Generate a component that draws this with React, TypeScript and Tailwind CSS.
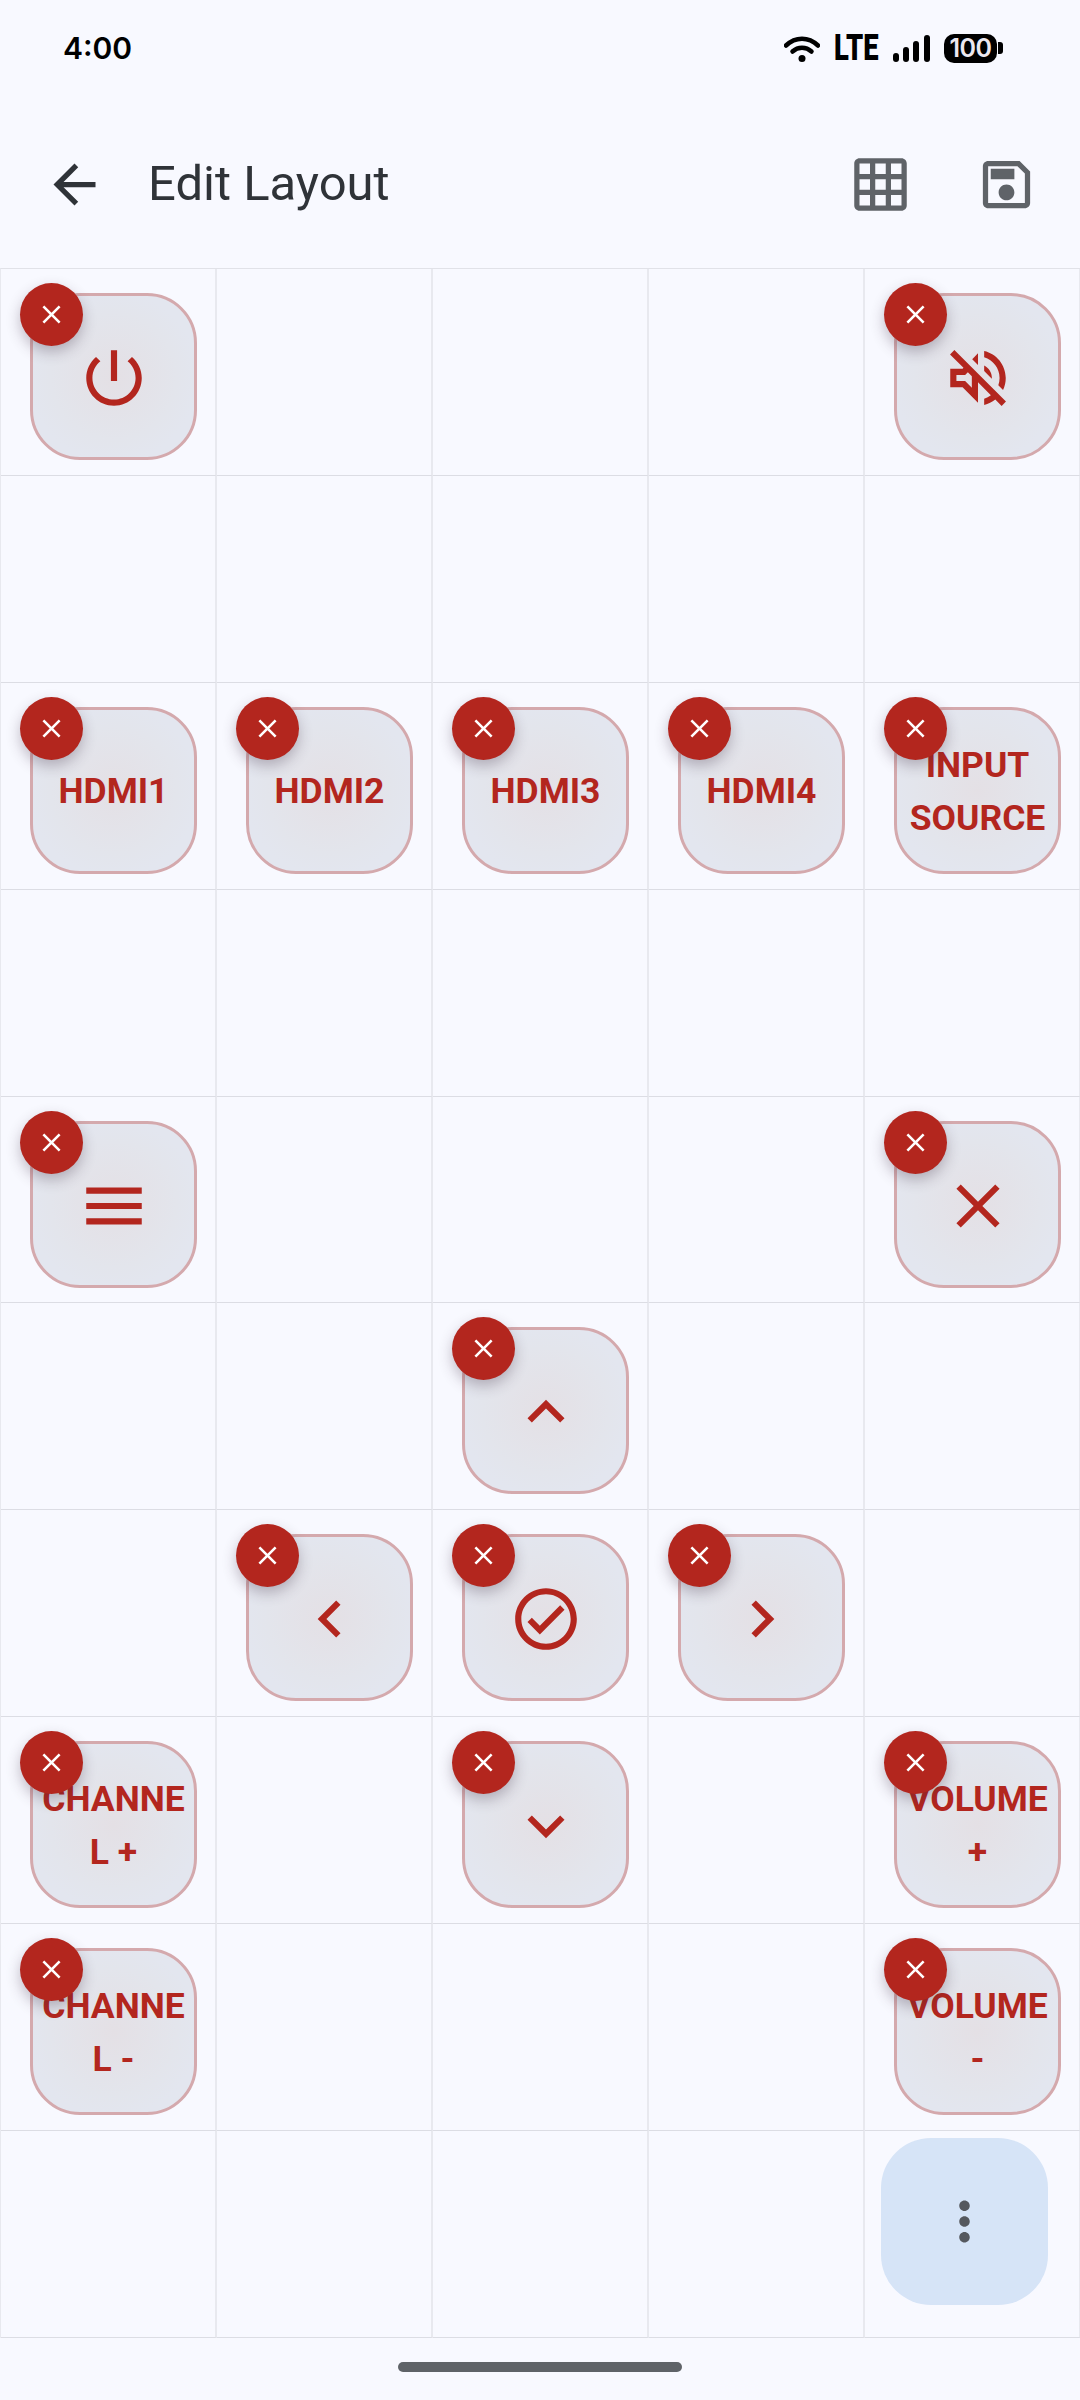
const red = "#b3261e"

const paths: Record<string, string> = {
  power: "M13 3h-2v10h2V3zm4.83 2.17l-1.42 1.42C17.99 7.86 19 9.81 19 12c0 3.87-3.13 7-7 7s-7-3.13-7-7c0-2.19 1.01-4.14 2.58-5.42L6.17 5.17C4.23 6.82 3 9.26 3 12c0 4.97 4.03 9 9 9s9-4.03 9-9c0-2.74-1.23-5.18-3.17-6.83z",
  mute: "M4.34 2.93L2.93 4.34 7.29 8.7 7 9H3v6h4l5 5v-6.59l4.18 4.18c-.65.49-1.38.88-2.18 1.11v2.06c1.34-.3 2.57-.92 3.61-1.75l2.05 2.05 1.41-1.41L4.34 2.93zM10 15.17L7.83 13H5v-2h2.83l.88-.88L10 11.41v3.76zM19 12c0 .82-.15 1.61-.41 2.34l1.53 1.53c.56-1.17.88-2.48.88-3.87 0-4.28-2.99-7.86-7-8.77v2.06c2.89.86 5 3.54 5 6.71zm-7-8l-1.88 1.88L12 7.76zm4.5 8c0-1.77-1.02-3.29-2.5-4.03v1.79l2.48 2.48c.01-.08.02-.16.02-.24z",
  menu: "M3 18h18v-2H3v2zm0-5h18v-2H3v2zm0-7v2h18V6H3z",
  close: "M19 6.41L17.59 5 12 10.59 6.41 5 5 6.41 10.59 12 5 17.59 6.41 19 12 13.41 17.59 19 19 17.59 13.41 12 19 6.41z",
  up: "M7.41 15.41L12 10.83l4.59 4.58L18 14l-6-6-6 6z",
  down: "M7.41 8.59L12 13.17l4.59-4.58L18 10l-6 6-6-6 1.41-1.41z",
  left: "M15.41 16.59L10.83 12l4.58-4.59L14 6l-6 6 6 6 1.41-1.41z",
  right: "M8.59 16.59L13.17 12 8.59 7.41 10 6l6 6-6 6-1.41-1.41z",
  check: "M12 2C6.48 2 2 6.48 2 12s4.48 10 10 10 10-4.48 10-10S17.52 2 12 2zm0 18c-4.41 0-8-3.59-8-8s3.59-8 8-8 8 3.59 8 8-3.59 8-8 8zm4.59-12.42L10 14.17l-2.59-2.58L6 13l4 4 8-8z",
  back: "M20 11H7.83l5.59-5.59L12 4l-8 8 8 8 1.41-1.41L7.83 13H20v-2z",
  grid: "M20 2H4c-1.1 0-2 .9-2 2v16c0 1.1.9 2 2 2h16c1.1 0 2-.9 2-2V4c0-1.1-.9-2-2-2zM8 20H4v-4h4v4zm0-6H4v-4h4v4zm0-6H4V4h4v4zm6 12h-4v-4h4v4zm0-6h-4v-4h4v4zm0-6h-4V4h4v4zm6 12h-4v-4h4v4zm0-6h-4v-4h4v4zm0-6h-4V4h4v4z",
  save: "M17 3H5c-1.11 0-2 .9-2 2v14c0 1.1.89 2 2 2h14c1.1 0 2-.9 2-2V7l-4-4zm2 16H5V5h11.17L19 7.83V19zm-7-7c-1.66 0-3 1.34-3 3s1.34 3 3 3 3-1.34 3-3-1.34-3-3-3zM6 6h9v4H6z",
  more: "M12 8c1.1 0 2-.9 2-2s-.9-2-2-2-2 .9-2 2 .9 2 2 2zm0 2c-1.1 0-2 .9-2 2s.9 2 2 2 2-.9 2-2-.9-2-2-2zm0 6c-1.1 0-2 .9-2 2s.9 2 2 2 2-.9 2-2-.9-2-2-2z",
}

function Icon({ name, size, color }: { name: string; size: number; color: string }) {
  return (
    <svg width={size} height={size} viewBox="0 0 24 24" fill={color} className="shrink-0">
      <path d={paths[name]} />
    </svg>
  )
}

// one entry per grid cell, row by row. null is an empty cell
type Cell = { icon?: string; lines?: string[] } | null

const cells: Cell[] = [
  { icon: "power" }, null, null, null, { icon: "mute" },
  null, null, null, null, null,
  { lines: ["HDMI1"] }, { lines: ["HDMI2"] }, { lines: ["HDMI3"] }, { lines: ["HDMI4"] }, { lines: ["INPUT", "SOURCE"] },
  null, null, null, null, null,
  { icon: "menu" }, null, null, null, { icon: "close" },
  null, null, { icon: "up" }, null, null,
  null, { icon: "left" }, { icon: "check" }, { icon: "right" }, null,
  { lines: ["CHANNE", "L +"] }, null, { icon: "down" }, null, { lines: ["VOLUME", "+"] },
  { lines: ["CHANNE", "L -"] }, null, null, null, { lines: ["VOLUME", "-"] },
  null, null, null, null, null,
]

function StatusBar() {
  return (
    <div className="h-[96px] flex items-center pl-[63px] pr-[77px] text-black">
      <span className="text-[30px] font-semibold leading-none font-['Inter',sans-serif]">4:00</span>
      <div className="ml-auto flex items-center">
        <svg width="36" height="27" viewBox="0 0 36 27" fill="none">
          <path d="M2 10.5C11.5 1.5 24.5 1.5 34 10.5" stroke="#000" strokeWidth="4.5" strokeLinecap="round" />
          <path d="M8.5 16.5C14 11.5 22 11.5 27.5 16.5" stroke="#000" strokeWidth="4.5" strokeLinecap="round" />
          <circle cx="18" cy="23.5" r="3.5" fill="#000" />
        </svg>
        <span className="ml-[14px] w-[45px] text-[36px] font-black leading-none origin-left scale-x-[0.76] font-['Roboto',sans-serif]">LTE</span>
        <svg className="ml-[14px]" width="37" height="27" viewBox="0 0 37 27" fill="#000">
          <rect x="0" y="18" width="6" height="9" rx="3" />
          <rect x="10" y="12" width="6" height="15" rx="3" />
          <rect x="20" y="6" width="6" height="21" rx="3" />
          <rect x="31" y="0" width="6" height="27" rx="3" />
        </svg>
        <div className="ml-[14px] w-[53px] h-[29px] rounded-[10px] bg-black flex items-center justify-center text-[#ece8f0] text-[25px] font-semibold leading-none tracking-[-0.5px] font-['Inter',sans-serif]">
          100
        </div>
        <div className="ml-[1px] w-[5px] h-[12px] rounded-r-[3px] bg-black" />
      </div>
    </div>
  )
}

function Header() {
  return (
    <div className="h-[172px] pt-[4px] flex items-center pl-[43px] pr-[42px]">
      <Icon name="back" size={63} color="#2f3338" />
      <span className="ml-[42px] -mt-[2px] text-[49px] leading-none text-[#2f3338] font-['Roboto',sans-serif]">Edit Layout</span>
      <div className="ml-auto flex items-center gap-[63px]">
        <Icon name="grid" size={63} color="#5f6368" />
        <Icon name="save" size={63} color="#5f6368" />
      </div>
    </div>
  )
}

function LayoutButton({ icon, lines }: { icon?: string; lines?: string[] }) {
  return (
    <div className="relative ml-[29px] mt-[24px] pt-[3px] w-[167px] h-[167px] rounded-[50px] border-[3px] border-[#d4a9ad] bg-[radial-gradient(circle,#e4e0e5_0%,#e3e5ec_55%,#e3e6ef_75%)] flex flex-col items-center justify-center">
      {icon && <Icon name={icon} size={74} color={red} />}
      {lines && (
        <div className="text-[35.5px] leading-[53px] font-bold text-center whitespace-nowrap text-[#b3261e] font-['Roboto',sans-serif]">
          {lines.map((l) => (
            <div key={l}>{l}</div>
          ))}
        </div>
      )}
      <div className="absolute -left-[13px] -top-[13px] w-[63px] h-[63px] rounded-full bg-[#b3261e] shadow-[0_6px_14px_rgba(60,40,60,0.3)] flex items-center justify-center">
        <Icon name="close" size={31} color="#ffffff" />
      </div>
    </div>
  )
}

export default function App() {
  return (
    <div className="w-[1080px] h-[2400px] bg-[#f8f9ff] overflow-hidden font-['Roboto',sans-serif]">
      <StatusBar />
      <Header />
      <div className="w-[1081px] grid grid-cols-[repeat(5,216px)] auto-rows-[206.9px] border-t border-t-[#e1e2e8] border-l border-l-[#e8e9ef]">
        {cells.map((c, i) => (
          <div key={i} className="border-r-2 border-b border-r-[#e8e9ef] border-b-[#dcdde4]">
            {c && <LayoutButton icon={c.icon} lines={c.lines} />}
            {i === 49 && (
              <div className="ml-[16px] mt-[7px] w-[167px] h-[167px] rounded-[50px] bg-[#d6e4f7] flex items-center justify-center">
                <Icon name="more" size={63} color="#55585e" />
              </div>
            )}
          </div>
        ))}
      </div>
      <div className="mt-[24px] mx-auto w-[284px] h-[10px] rounded-full bg-[#5f6368]" />
    </div>
  )
}
